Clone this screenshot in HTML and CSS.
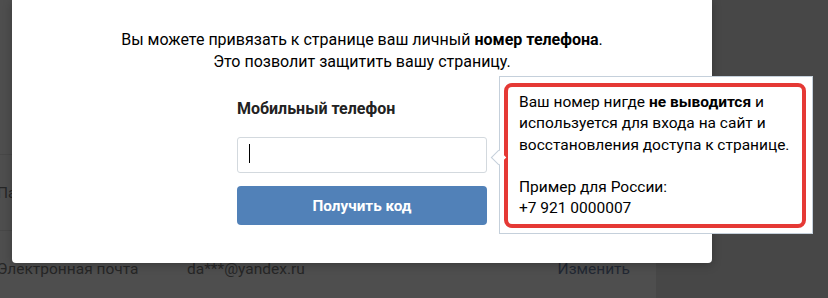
FILE: index.html
```html
<!DOCTYPE html>
<html lang="ru">
<head>
    <meta charset="UTF-8">
    <title>Номер телефона</title>
    <link rel="stylesheet" href="styles.css">
</head>
<body>
    <div class="page">
        <div class="settings">
            <div class="row row-top"></div>
            <div class="row">
                <span class="row-label">Пароль</span>
            </div>
            <div class="row">
                <span class="row-label">Электронная почта</span>
                <span class="row-value">da***@yandex.ru</span>
                <span class="row-link">Изменить</span>
            </div>
        </div>
    </div>

    <div class="modal">
        <p class="intro">
            Вы можете привязать к странице ваш личный <b>номер телефона</b>.<br>
            Это позволит защитить вашу страницу.
        </p>

        <form class="phone-form">
            <label for="phone">Мобильный телефон</label>
            <div class="input-wrap">
                <input type="text" id="phone">
                <span class="caret"></span>
            </div>
            <button type="button" class="submit-btn">Получить код</button>
        </form>
    </div>

    <div class="tooltip">
        <div class="highlight">
            Ваш номер нигде <b>не выводится</b> и<br>
            используется для входа на сайт и<br>
            восстановления доступа к странице.<br>
            <br>
            Пример для России:<br>
            +7 921 0000007
        </div>
    </div>
</body>
</html>
```

FILE: styles.css
```css
body {
    margin: 0;
    height: 298px;
    overflow: hidden;
    background: #474747;
    font-family: Roboto, 'Open Sans', Arial, sans-serif;
    font-size: 15px;
    position: relative;
}

.page {
    width: 656px;
    height: 298px;
    background: #4e4e4e;
}

.row {
    display: flex;
    align-items: center;
    height: 75px;
    border-bottom: 1px solid #474747;
    color: #262626;
    font-size: 15.5px;
}

.row-top {
    height: 154px;
}

.row-label {
    width: 190px;
    margin-left: -3px;
}

.row-value {
    flex: 1;
}

.row-link {
    color: #222833;
    margin-right: 26px;
}

.modal {
    position: absolute;
    left: 12px;
    top: 0;
    width: 700px;
    height: 263px;
    background: white;
    border-radius: 0 0 4px 4px;
    box-shadow: 0 2px 10px rgba(0,0,0,0.25);
}

.intro {
    margin: 0;
    padding-top: 29px;
    text-align: center;
    font-size: 16px;
    line-height: 22px;
    color: #000;
}

.phone-form {
    width: 250px;
    margin: 25px 0 0 225px;
}

label {
    display: block;
    font-size: 16px;
    font-weight: bold;
    color: #222;
    line-height: 22px;
    margin-bottom: 17px;
}

.input-wrap {
    position: relative;
}

input {
    box-sizing: border-box;
    width: 100%;
    height: 36px;
    border: 1px solid #d3d9de;
    border-radius: 3px;
    padding: 0 12px;
    font-size: 15px;
    outline: none;
}

.caret {
    position: absolute;
    left: 12px;
    top: 7px;
    width: 1px;
    height: 19px;
    background: #000;
}

.submit-btn {
    display: block;
    width: 100%;
    height: 39px;
    margin-top: 13px;
    background: #5181b8;
    color: white;
    border: none;
    border-radius: 4px;
    font-family: inherit;
    font-size: 15.3px;
    font-weight: bold;
}

.tooltip {
    position: absolute;
    left: 499px;
    top: 76px;
    width: 314px;
    height: 158px;
    background: white;
    border: 1px solid #c5d0db;
    padding: 6px 6px 0 4px;
    box-sizing: border-box;
}

.tooltip::before {
    content: "";
    position: absolute;
    left: -7px;
    top: 75px;
    width: 10px;
    height: 10px;
    background: white;
    border-left: 1px solid #c5d0db;
    border-bottom: 1px solid #c5d0db;
    transform: rotate(45deg);
}

.highlight {
    height: 145px;
    box-sizing: border-box;
    border: 4px solid #e53935;
    border-radius: 8px;
    padding: 5px 10px 0 11px;
    font-size: 15.5px;
    line-height: 21.3px;
    color: #000;
}
```
